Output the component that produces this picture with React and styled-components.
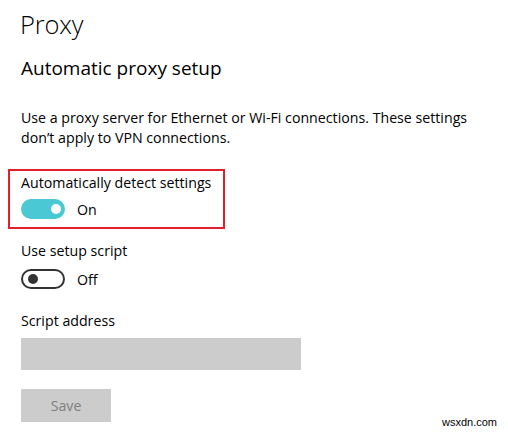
import React from "react";
import styled, { createGlobalStyle } from "styled-components";

const GlobalStyle = createGlobalStyle`
  body {
    margin: 0;
    background: #ffffff;
    font-family: "Open Sans", "Noto Sans", "Liberation Sans", sans-serif;
    color: #000000;
  }
`;

const Page = styled.div`
  position: relative;
  width: 508px;
  height: 433px;
  padding: 0 0 0 21px;
  box-sizing: border-box;
  overflow: hidden;
`;

const Title = styled.h1`
  margin: 0;
  padding-top: 7px;
  margin-left: -1px;
  font-size: 25.5px;
  font-weight: 300;
  line-height: 35px;
  letter-spacing: -0.2px;
`;

const SubTitle = styled.h2`
  margin: 13px 0 0;
  font-size: 19px;
  font-weight: 400;
  line-height: 26px;
`;

const Text = styled.p`
  margin: ${(p) => p.$mt || 0}px 0 0;
  font-size: 14.2px;
  line-height: 20px;
  width: 470px;
`;

const Highlight = styled.div`
  margin: 21px 0 0 -13px;
  width: 217px;
  height: 60px;
  box-sizing: border-box;
  border: 2px solid #e0202a;
  padding: 2px 0 0 11px;
`;

const ToggleRow = styled.div`
  display: flex;
  align-items: center;
  gap: 12px;
  margin-top: ${(p) => p.$mt || 0}px;
  height: 20px;
  font-size: 14.2px;
`;

const Track = styled.div`
  position: relative;
  width: 44px;
  height: 20px;
  box-sizing: border-box;
  border-radius: 10px;
  background: ${(p) => (p.$on ? "#4ac8d4" : "#ffffff")};
  border: 2px solid ${(p) => (p.$on ? "#4ac8d4" : "#333333")};
`;

const Knob = styled.div`
  position: absolute;
  top: 3px;
  left: ${(p) => (p.$on ? "28px" : "5px")};
  width: 10px;
  height: 10px;
  border-radius: 50%;
  background: ${(p) => (p.$on ? "#ffffff" : "#333333")};
`;

const Input = styled.div`
  margin-top: 7px;
  width: 280px;
  height: 32px;
  background: #cccccc;
`;

const Button = styled.button`
  display: block;
  margin-top: 19px;
  width: 90px;
  height: 33px;
  border: none;
  background: #cccccc;
  color: #808080;
  font-family: inherit;
  font-size: 14.2px;
  padding: 0;
`;

const Watermark = styled.div`
  position: absolute;
  right: 11px;
  bottom: 5px;
  font-family: "Liberation Sans", Arial, sans-serif;
  font-size: 11px;
  color: #000000;
`;

const Toggle = ({ on, label, mt }) => (
  <ToggleRow $mt={mt}>
    <Track $on={on}>
      <Knob $on={on} />
    </Track>
    <span>{label}</span>
  </ToggleRow>
);

export default function App() {
  return (
    <>
      <GlobalStyle />
      <Page>
        <Title>Proxy</Title>
        <SubTitle>Automatic proxy setup</SubTitle>
        <Text $mt={27}>
          Use a proxy server for Ethernet or Wi-Fi connections. These settings
          don’t apply to VPN connections.
        </Text>
        <Highlight>
          <Text>Automatically detect settings</Text>
          <Toggle on label="On" mt={6} />
        </Highlight>
        <Text $mt={12}>Use setup script</Text>
        <Toggle label="Off" mt={8} />
        <Text $mt={22}>Script address</Text>
        <Input />
        <Button disabled>Save</Button>
        <Watermark>wsxdn.com</Watermark>
      </Page>
    </>
  );
}
